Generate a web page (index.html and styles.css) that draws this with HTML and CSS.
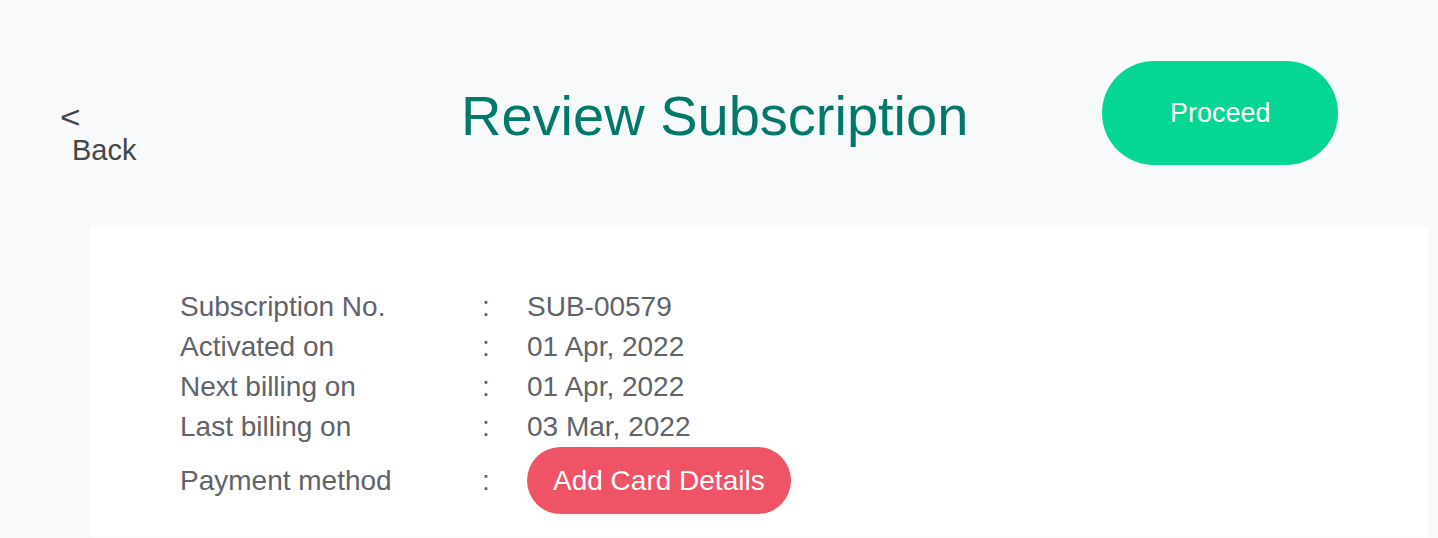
FILE: index.html
```html
<!DOCTYPE html>
<html lang="en">
<head>
<meta charset="utf-8">
<title>Review Subscription</title>
<link rel="stylesheet" href="styles.css">
</head>
<body>
<div class="page">
  <header class="header">
    <a class="back" href="#">
      <span class="back-arrow">&lt;</span>
      <span class="back-label">Back</span>
    </a>
    <h1 class="title">Review Subscription</h1>
    <button class="btn-proceed" type="button">Proceed</button>
  </header>
  <section class="card">
    <div class="details">
      <div class="label">Subscription No.</div><div class="colon">:</div><div class="value">SUB-00579</div>
      <div class="label">Activated on</div><div class="colon">:</div><div class="value">01 Apr, 2022</div>
      <div class="label">Next billing on</div><div class="colon">:</div><div class="value">01 Apr, 2022</div>
      <div class="label">Last billing on</div><div class="colon">:</div><div class="value">03 Mar, 2022</div>
      <div class="label label-pay">Payment method</div><div class="colon label-pay">:</div><div class="value"><button class="btn-card" type="button">Add Card Details</button></div>
    </div>
  </section>
</div>
</body>
</html>
```

FILE: styles.css
```css
html, body {
  margin: 0;
  padding: 0;
  background: #f8f9fb;
  font-family: "Liberation Sans", Arial, sans-serif;
}

.header {
  display: flex;
  align-items: flex-start;
  padding: 61px 0 0 60px;
}

.back {
  flex: 0 0 401px;
  display: flex;
  flex-direction: column;
  align-items: flex-start;
  margin-top: 40px;
  font-size: 29px;
  line-height: 33px;
  color: #454545;
  text-decoration: none;
}

.back-arrow {
  display: inline-block;
  font-size: 32px;
  transform: scaleX(1.1);
  transform-origin: left center;
}

.back-label {
  margin-left: 12px;
}

.title {
  margin: 23px 0 0 0;
  font-size: 56px;
  line-height: 64px;
  font-weight: normal;
  color: #00786a;
}

.btn-proceed {
  margin-left: 134px;
  width: 236px;
  height: 104px;
  border: none;
  border-radius: 52px;
  background: #05d694;
  color: #ffffff;
  font-family: "Liberation Sans", Arial, sans-serif;
  font-size: 27px;
  padding: 0;
  cursor: pointer;
}

.card {
  margin: 60px 10px 0 90px;
  background: #ffffff;
  padding: 60px 0 23px 90px;
}

.details {
  display: grid;
  grid-template-columns: 301px 46px auto;
  font-size: 28px;
  line-height: 40px;
  color: #606367;
}

.colon {
  padding-left: 1px;
}

.label-pay {
  align-self: center;
}

.value {
  display: flex;
  align-items: center;
}

.btn-card {
  height: 67px;
  padding: 0 26px;
  border: none;
  border-radius: 34px;
  background: #ee5366;
  color: #ffffff;
  font-family: "Liberation Sans", Arial, sans-serif;
  font-size: 28px;
  cursor: pointer;
}
```
